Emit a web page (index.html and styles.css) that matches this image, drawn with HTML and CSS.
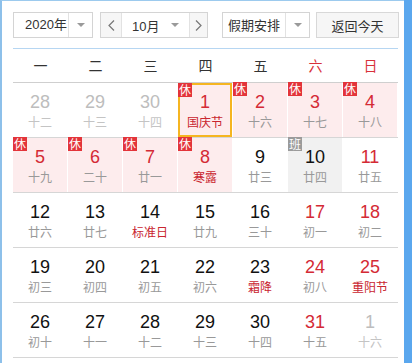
FILE: index.html
```html
<!DOCTYPE html>
<html lang="zh">
<head>
<meta charset="utf-8">
<title>万年历</title>
<link rel="stylesheet" href="styles.css">
</head>
<body>
<div class="page">
  <div class="cal">
    <div class="toolbar">
      <div class="select year">
        <span class="sel-text">2020年</span>
        <span class="sel-arrow"><i class="tri"></i></span>
      </div>
      <div class="month-group">
        <span class="nav"><svg width="7" height="11" viewBox="0 0 7 11"><path d="M6 0.5 L1 5.5 L6 10.5" fill="none" stroke="#777" stroke-width="1.2"/></svg></span>
        <div class="month-sel">
          <span class="month-text">10月</span>
          <i class="tri"></i>
        </div>
        <span class="nav next"><svg width="7" height="11" viewBox="0 0 7 11"><path d="M1 0.5 L6 5.5 L1 10.5" fill="none" stroke="#777" stroke-width="1.2"/></svg></span>
      </div>
      <div class="select holiday">
        <span class="sel-text center">假期安排</span>
        <span class="sel-arrow"><i class="tri"></i></span>
      </div>
      <button class="today-btn">返回今天</button>
    </div>

    <div class="weekdays">
      <span>一</span><span>二</span><span>三</span><span>四</span><span>五</span><span class="we">六</span><span class="we">日</span>
    </div>

    <div class="grid">
      <div class="cell"><div class="in"><b class="num other">28</b><span class="lunar other">十二</span></div></div>
      <div class="cell"><div class="in"><b class="num other">29</b><span class="lunar other">十三</span></div></div>
      <div class="cell"><div class="in"><b class="num other">30</b><span class="lunar other">十四</span></div></div>
      <div class="cell"><div class="in rest today"><i class="badge">休</i><b class="num red">1</b><span class="lunar fest">国庆节</span></div></div>
      <div class="cell"><div class="in rest"><i class="badge">休</i><b class="num red">2</b><span class="lunar">十六</span></div></div>
      <div class="cell"><div class="in rest"><i class="badge">休</i><b class="num red">3</b><span class="lunar">十七</span></div></div>
      <div class="cell"><div class="in rest"><i class="badge">休</i><b class="num red">4</b><span class="lunar">十八</span></div></div>

      <div class="cell"><div class="in rest"><i class="badge">休</i><b class="num red">5</b><span class="lunar">十九</span></div></div>
      <div class="cell"><div class="in rest"><i class="badge">休</i><b class="num red">6</b><span class="lunar">二十</span></div></div>
      <div class="cell"><div class="in rest"><i class="badge">休</i><b class="num red">7</b><span class="lunar">廿一</span></div></div>
      <div class="cell"><div class="in rest"><i class="badge">休</i><b class="num red">8</b><span class="lunar fest">寒露</span></div></div>
      <div class="cell"><div class="in"><b class="num">9</b><span class="lunar">廿三</span></div></div>
      <div class="cell"><div class="in work"><i class="badge gray">班</i><b class="num">10</b><span class="lunar">廿四</span></div></div>
      <div class="cell"><div class="in"><b class="num red">11</b><span class="lunar">廿五</span></div></div>

      <div class="cell"><div class="in"><b class="num">12</b><span class="lunar">廿六</span></div></div>
      <div class="cell"><div class="in"><b class="num">13</b><span class="lunar">廿七</span></div></div>
      <div class="cell"><div class="in"><b class="num">14</b><span class="lunar fest">标准日</span></div></div>
      <div class="cell"><div class="in"><b class="num">15</b><span class="lunar">廿九</span></div></div>
      <div class="cell"><div class="in"><b class="num">16</b><span class="lunar">三十</span></div></div>
      <div class="cell"><div class="in"><b class="num red">17</b><span class="lunar">初一</span></div></div>
      <div class="cell"><div class="in"><b class="num red">18</b><span class="lunar">初二</span></div></div>

      <div class="cell"><div class="in"><b class="num">19</b><span class="lunar">初三</span></div></div>
      <div class="cell"><div class="in"><b class="num">20</b><span class="lunar">初四</span></div></div>
      <div class="cell"><div class="in"><b class="num">21</b><span class="lunar">初五</span></div></div>
      <div class="cell"><div class="in"><b class="num">22</b><span class="lunar">初六</span></div></div>
      <div class="cell"><div class="in"><b class="num">23</b><span class="lunar fest">霜降</span></div></div>
      <div class="cell"><div class="in"><b class="num red">24</b><span class="lunar">初八</span></div></div>
      <div class="cell"><div class="in"><b class="num red">25</b><span class="lunar fest">重阳节</span></div></div>

      <div class="cell"><div class="in"><b class="num">26</b><span class="lunar">初十</span></div></div>
      <div class="cell"><div class="in"><b class="num">27</b><span class="lunar">十一</span></div></div>
      <div class="cell"><div class="in"><b class="num">28</b><span class="lunar">十二</span></div></div>
      <div class="cell"><div class="in"><b class="num">29</b><span class="lunar">十三</span></div></div>
      <div class="cell"><div class="in"><b class="num">30</b><span class="lunar">十四</span></div></div>
      <div class="cell"><div class="in"><b class="num red">31</b><span class="lunar">十五</span></div></div>
      <div class="cell"><div class="in"><b class="num other">1</b><span class="lunar other">十六</span></div></div>
    </div>
  </div>
  <div class="side"></div>
</div>
</body>
</html>
```

FILE: styles.css
```css
* { box-sizing: border-box; }
html, body { margin: 0; padding: 0; background: #fff; }
body {
  font-family: "Liberation Sans", "Noto Sans CJK SC", Arial, sans-serif;
  color: #333;
}
.page {
  display: flex;
  width: 412px;
  height: 363px;
  overflow: hidden;
}
.cal {
  width: 404px;
  border-left: 2px solid #8dc0ea;
  border-top: 1px solid #9ccaee;
  padding: 11px 0 0 11px;
}
.side {
  width: 8px;
  background: #5aa7ee;
}

/* toolbar */
.toolbar {
  display: flex;
  align-items: center;
  height: 26px;
  margin-bottom: 10px;
  font-family: "Noto Sans CJK SC", "Liberation Sans", sans-serif;
  font-size: 13px;
  color: #333;
}
.select {
  display: flex;
  height: 26px;
  border: 1px solid #d4d4d4;
  background: #fff;
}
.year { width: 80px; margin-right: 7px; }
.year .sel-text { width: 54px; padding-left: 11px; font-family: "Liberation Sans", "Noto Sans CJK SC", sans-serif; }
.sel-text {
  display: flex;
  align-items: center;
  line-height: 24px;
}
.sel-text.center { justify-content: center; width: 62px; }
.sel-arrow {
  flex: 1;
  display: flex;
  align-items: center;
  justify-content: center;
  border-left: 1px solid #e2e2e2;
}
.tri {
  display: block;
  width: 0;
  height: 0;
  border-left: 4px solid transparent;
  border-right: 4px solid transparent;
  border-top: 4px solid #9a9a9a;
}
.month-group {
  display: flex;
  height: 26px;
  width: 108px;
  border: 1px solid #d4d4d4;
  margin-right: 14px;
}
.nav {
  width: 21px;
  display: flex;
  align-items: center;
  justify-content: center;
  background: #f6f6f6;
  border-right: 1px solid #e2e2e2;
}
.nav.next { border-right: 0; border-left: 1px solid #e2e2e2; flex: 1; }
.month-sel {
  width: 67px;
  display: flex;
  align-items: center;
  padding-left: 10px;
}
.month-text { font-family: "Liberation Sans", "Noto Sans CJK SC", sans-serif; width: 39px; }
.holiday { width: 88px; margin-right: 6px; }
.today-btn {
  width: 83px;
  height: 26px;
  border: 1px solid #d8d8d8;
  background: #f6f6f6;
  font-family: "Noto Sans CJK SC", sans-serif;
  font-size: 13px;
  color: #333;
  padding: 0;
  margin: 0;
}

/* weekdays */
.weekdays {
  width: 385px;
  display: grid;
  grid-template-columns: repeat(7, 55px);
  border-top: 1px solid #b6d6f2;
  border-bottom: 1px solid #cfcfcf;
  height: 35px;
  font-family: "Noto Sans CJK SC", sans-serif;
  font-size: 14px;
  color: #333;
}
.weekdays span {
  text-align: center;
  line-height: 32px;
}
.weekdays .we { color: #d8313a; }

/* grid */
.grid {
  width: 385px;
  display: grid;
  grid-template-columns: repeat(7, 55px);
}
.cell {
  height: 55px;
  border-bottom: 1px solid #d6d6d6;
}
.in {
  position: relative;
  width: 54px;
  height: 54px;
  display: flex;
  flex-direction: column;
  align-items: center;
  padding-top: 9px;
}
.in.rest { background: #fdeced; }
.in.work { background: #f1f1f1; }
.in.today { border: 2px solid #f5b521; padding-top: 7px; }
.num {
  font-family: "Liberation Sans", Arial, sans-serif;
  font-weight: normal;
  font-size: 18px;
  line-height: 20px;
  color: #111;
}
.num.red { color: #d42a35; }
.num.other { color: #bdbdbd; }
.lunar {
  margin-top: 2px;
  font-family: "Noto Sans CJK SC", sans-serif;
  font-size: 12px;
  line-height: 16px;
  color: #999;
}
.lunar.fest { color: #c9252f; }
.lunar.other { color: #c4c4c4; }
.badge {
  position: absolute;
  top: -1px;
  left: 0;
  width: 14px;
  height: 14px;
  background: #e3343a;
  color: #fff;
  font-style: normal;
  font-family: "Noto Sans CJK SC", sans-serif;
  font-size: 12px;
  line-height: 14px;
  text-align: center;
}
.today .badge { top: -2px; left: -2px; }
.badge.gray { background: #9b9b9b; }
```
